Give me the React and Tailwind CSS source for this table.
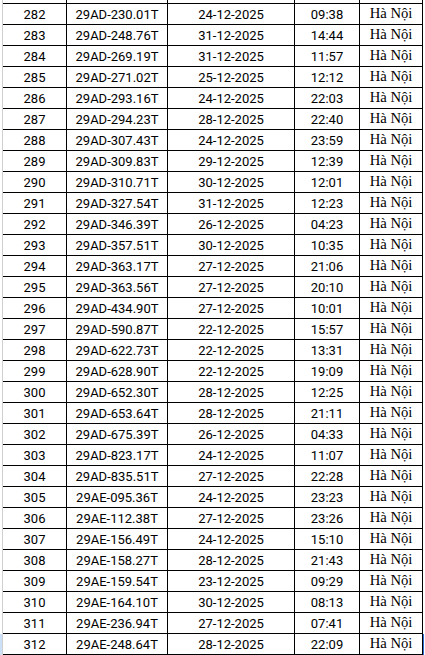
import React from "react";

const rows = [
  ["282", "29AD-230.01T", "24-12-2025", "09:38"],
  ["283", "29AD-248.76T", "31-12-2025", "14:44"],
  ["284", "29AD-269.19T", "31-12-2025", "11:57"],
  ["285", "29AD-271.02T", "25-12-2025", "12:12"],
  ["286", "29AD-293.16T", "24-12-2025", "22:03"],
  ["287", "29AD-294.23T", "28-12-2025", "22:40"],
  ["288", "29AD-307.43T", "24-12-2025", "23:59"],
  ["289", "29AD-309.83T", "29-12-2025", "12:39"],
  ["290", "29AD-310.71T", "30-12-2025", "12:01"],
  ["291", "29AD-327.54T", "31-12-2025", "12:23"],
  ["292", "29AD-346.39T", "26-12-2025", "04:23"],
  ["293", "29AD-357.51T", "30-12-2025", "10:35"],
  ["294", "29AD-363.17T", "27-12-2025", "21:06"],
  ["295", "29AD-363.56T", "27-12-2025", "20:10"],
  ["296", "29AD-434.90T", "27-12-2025", "10:01"],
  ["297", "29AD-590.87T", "22-12-2025", "15:57"],
  ["298", "29AD-622.73T", "22-12-2025", "13:31"],
  ["299", "29AD-628.90T", "22-12-2025", "19:09"],
  ["300", "29AD-652.30T", "28-12-2025", "12:25"],
  ["301", "29AD-653.64T", "28-12-2025", "21:11"],
  ["302", "29AD-675.39T", "26-12-2025", "04:33"],
  ["303", "29AD-823.17T", "24-12-2025", "11:07"],
  ["304", "29AD-835.51T", "27-12-2025", "22:28"],
  ["305", "29AE-095.36T", "24-12-2025", "23:23"],
  ["306", "29AE-112.38T", "27-12-2025", "23:26"],
  ["307", "29AE-156.49T", "24-12-2025", "15:10"],
  ["308", "29AE-158.27T", "28-12-2025", "21:43"],
  ["309", "29AE-159.54T", "23-12-2025", "09:29"],
  ["310", "29AE-164.10T", "30-12-2025", "08:13"],
  ["311", "29AE-236.94T", "27-12-2025", "07:41"],
  ["312", "29AE-248.64T", "28-12-2025", "22:09"],
];

const sans = { fontFamily: "Roboto, 'Liberation Sans', sans-serif" };
const serif = { fontFamily: "'Liberation Serif', 'Times New Roman', serif" };

function Row({ r, last }) {
  const cell = "flex items-end justify-center pb-[2px] border-r border-black text-black";
  return (
    <div className="flex h-[21px]">
      <div className={"w-[2px] shrink-0 " + (last ? "bg-[#cce0f8]" : "bg-white")} />
      <div className="w-px shrink-0 bg-[#d0d0d0]" />
      <div className="grid grid-cols-[64px_101px_127px_65px_63px] border-b border-black">
        <div className={cell + " text-[13px] leading-[15px]"} style={sans}>{r[0]}</div>
        <div className={cell + " text-[13px] leading-[15px]"} style={sans}>{r[1]}</div>
        <div className={cell + " text-[13px] leading-[15px]"} style={sans}>{r[2]}</div>
        <div className={cell + " text-[13px] leading-[15px]"} style={sans}>{r[3]}</div>
        <div className={cell + " text-[14.67px] leading-[17px] pb-[1px]"} style={serif}>Hà Nội</div>
      </div>
      <div className={"w-px shrink-0 " + (last ? "bg-[#2f6fd6]" : "bg-white")} />
    </div>
  );
}

export default function App() {
  return (
    <div className="w-[425px] h-[655px] bg-white overflow-hidden">
      <div className="flex h-[4px]">
        <div className="w-[2px] shrink-0" />
        <div className="w-px shrink-0 bg-[#d0d0d0]" />
        <div className="grid grid-cols-[64px_101px_127px_65px_63px] border-b border-black h-[4px]">
          <div className="border-r border-black" />
          <div className="border-r border-black" />
          <div className="border-r border-black" />
          <div className="border-r border-black" />
          <div className="border-r border-black" />
        </div>
      </div>
      {rows.map((r, i) => (
        <Row key={r[0]} r={r} last={i === rows.length - 1} />
      ))}
    </div>
  );
}
